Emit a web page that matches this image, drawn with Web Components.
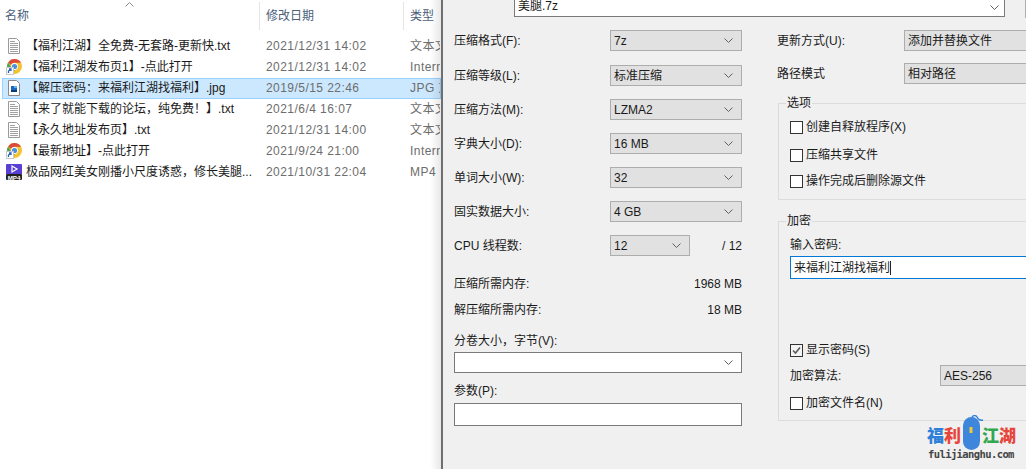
<!DOCTYPE html>
<html lang="zh">
<head>
<meta charset="utf-8">
<title>7z</title>
<style>
    html, body { margin: 0; height: 100%; }
    body {
        width: 1026px;
        height: 469px;
        overflow: hidden;
        display: flex;
        font: 12px/16px "Liberation Sans", "Noto Sans CJK SC", sans-serif;
        color: #1a1a1a;
        background: #fff;
    }
</style>
</head>
<body>
<file-pane>
    <file-row icon="txt" name="【福利江湖】全免费-无套路-更新快.txt" date="2021/12/31 14:02" type="文本文"></file-row>
    <file-row icon="web" name="【福利江湖发布页1】-点此打开" date="2021/12/31 14:02" type="Intern"></file-row>
    <file-row icon="jpg" name="【解压密码：来福利江湖找福利】.jpg" date="2019/5/15 22:46" type="JPG 文" selected></file-row>
    <file-row icon="txt" name="【来了就能下载的论坛，纯免费！】.txt" date="2021/6/4 16:07" type="文本文"></file-row>
    <file-row icon="txt" name="【永久地址发布页】.txt" date="2021/12/31 14:00" type="文本文"></file-row>
    <file-row icon="web" name="【最新地址】-点此打开" date="2021/9/24 21:00" type="Intern"></file-row>
    <file-row icon="mp4" name="极品网红美女刚播小尺度诱惑，修长美腿..." date="2021/10/31 22:04" type="MP4 -"></file-row>
</file-pane>

<zip-dialog>
    <form-row slot="left" label="压缩格式(F):" top="0"><drop-select value="7z"></drop-select></form-row>
    <form-row slot="left" label="压缩等级(L):" top="14"><drop-select value="标准压缩"></drop-select></form-row>
    <form-row slot="left" label="压缩方法(M):" top="13"><drop-select value="LZMA2"></drop-select></form-row>
    <form-row slot="left" label="字典大小(D):" top="13"><drop-select value="16 MB"></drop-select></form-row>
    <form-row slot="left" label="单词大小(W):" top="13"><drop-select value="32"></drop-select></form-row>
    <form-row slot="left" label="固实数据大小:" top="13"><drop-select value="4 GB"></drop-select></form-row>
    <form-row slot="left" label="CPU 线程数:" top="13" note="/ 12"><drop-select value="12" style="width:80px"></drop-select></form-row>
    <form-row slot="left" label="压缩所需内存:" top="20" note="1968 MB" compact></form-row>
    <form-row slot="left" label="解压缩所需内存:" top="10" note="18 MB" compact></form-row>
    <field-stack slot="left" label="分卷大小，字节(V):" top="15" gap="3"><drop-select blank></drop-select></field-stack>
    <field-stack slot="left" label="参数(P):" top="10" gap="4"><text-box></text-box></field-stack>

    <form-row slot="right" label="更新方式(U):" top="0" wide><drop-select value="添加并替换文件" style="width:200px"></drop-select></form-row>
    <form-row slot="right" label="路径模式" top="12" wide><drop-select value="相对路径" style="width:200px"></drop-select></form-row>
    <group-box slot="right" label="选项" top="11" pad="10">
        <check-row label="创建自释放程序(X)"></check-row>
        <check-row label="压缩共享文件" top="12"></check-row>
        <check-row label="操作完成后删除源文件" top="10"></check-row>
    </group-box>
    <group-box slot="right" label="加密" top="13" pad="9">
        <div>输入密码:</div>
        <text-box value="来福利江湖找福利" focused style="margin-top:3px"></text-box>
        <check-row label="显示密码(S)" checked top="63"></check-row>
        <form-row label="加密算法:" top="7" wide2><drop-select value="AES-256" style="width:200px"></drop-select></form-row>
        <check-row label="加密文件名(N)" top="9"></check-row>
    </group-box>
</zip-dialog>

<site-logo></site-logo>

<script>
const ICONS = {
    txt: `<svg width="16" height="16" viewBox="0 0 16 16">
        <path d="M2.5.5h8l3 3v12h-11z" fill="#fff" stroke="#9a9a9a"/>
        <path d="M4 3.5h5M4 5.5h8M4 7.5h8M4 9.5h8M4 11.5h8M4 13.5h8" stroke="#a0a0a0"/>
    </svg>`,
    web: `<svg width="16" height="16" viewBox="0 0 16 16">
        <circle cx="8.5" cy="7.5" r="7.5" fill="#f4c430"/>
        <path d="M8.5 0a7.5 7.5 0 0 1 6.5 3.75H8.5a3.75 3.75 0 0 0-3.4 2.2L2.2 3.4A7.5 7.5 0 0 1 8.5 0z" fill="#dc4a3b"/>
        <path d="M2.2 3.4l3 5A3.75 3.75 0 0 0 9 11.2L6.4 14.7A7.5 7.5 0 0 1 2.2 3.4z" fill="#4ea55a"/>
        <circle cx="8.5" cy="7.5" r="3.4" fill="#fff"/>
        <circle cx="8.5" cy="7.5" r="2.6" fill="#4a8fe0"/>
        <rect x=".5" y="8.5" width="7" height="7" fill="#fff" stroke="#c8c8c8"/>
        <path d="M2.5 14v-2l2-1.5M3 10h2v2" fill="none" stroke="#2a62b8" stroke-width="1.3"/>
    </svg>`,
    jpg: `<svg width="16" height="16" viewBox="0 0 16 16">
        <path d="M2.5.5h8l3 3v12h-11z" fill="#fff" stroke="#8a8a8a"/>
        <rect x="5" y="6" width="6" height="6" fill="#1769c4"/>
        <rect x="5" y="10" width="6" height="2" fill="#0b3c78"/>
        <rect x="8" y="6" width="3" height="2" fill="#5fb4ee"/>
    </svg>`,
    mp4: `<svg width="16" height="16" viewBox="0 0 16 16">
        <path d="M1 0h14a1 1 0 0 1 1 1v9H0V1a1 1 0 0 1 1-1z" fill="#5a3fd6"/>
        <path d="M6 2l5 3-5 3z" fill="none" stroke="#fff" stroke-width="1.2"/>
        <rect y="10" width="16" height="6" rx="1" fill="#222"/>
        <text x="8" y="15.5" text-anchor="middle" font-family="Liberation Sans" font-weight="700" font-size="6.2" fill="#fff">MP4</text>
    </svg>`
};
const CHEVRON = `<svg width="9" height="5" viewBox="0 0 9 5"><path d="M.5.5l4 4 4-4" fill="none" stroke="#606060"/></svg>`;

class FilePane extends HTMLElement {
    constructor() {
        super();
        this.attachShadow({ mode: 'open' }).innerHTML = `
            <style>
                :host { display: block; position: relative; flex: 0 0 441px; width: 441px; height: 469px; overflow: hidden; background: #fff; }
                .head { display: flex; height: 30px; color: #4c607a; }
                .col { box-sizing: border-box; height: 28px; margin-top: 2px; padding-top: 6px; border-right: 1px solid #e5e5e5; position: relative; }
                .name { flex: 0 0 260px; padding-left: 5px; }
                .date { flex: 0 0 144px; padding-left: 6px; }
                .type { flex: 1; padding-left: 6px; border: 0; }
                .sort { position: absolute; left: 125px; top: 0; }
                .rows { padding-top: 6px; }
                .edge { position: absolute; top: 0; right: 0; bottom: 0; width: 11px; background: linear-gradient(90deg, rgba(0,0,0,0), rgba(0,0,0,.09)); }
            </style>
            <div class="head">
                <div class="col name">名称<svg class="sort" width="9" height="5" viewBox="0 0 9 5"><path d="M.5 4.5l4-4 4 4" fill="none" stroke="#8a8a8a"/></svg></div>
                <div class="col date">修改日期</div>
                <div class="col type">类型</div>
            </div>
            <div class="rows"><slot></slot></div>
            <div class="edge"></div>`;
    }
}

class FileRow extends HTMLElement {
    constructor() {
        super();
        this.attachShadow({ mode: 'open' });
    }
    connectedCallback() {
        this.shadowRoot.innerHTML = `
            <style>
                :host { display: block; }
                .row { box-sizing: border-box; display: grid; grid-template-columns: 20px 240px 144px 31px; align-items: center; height: 21px; margin-left: 2px; padding: 0 0 2px 3px; border: 1px solid transparent; white-space: nowrap; overflow: hidden; }
                :host([selected]) .row { background: #cce8ff; border-color: #99d1ff; }
                .icon { display: block; height: 16px; }
                .icon svg { display: block; }
                .date, .type { color: #6d6d6d; letter-spacing: .45px; }
                .type { overflow: hidden; }
            </style>
            <div class="row">
                <span class="icon">${ICONS[this.getAttribute('icon')]}</span>
                <span>${this.getAttribute('name')}</span>
                <span class="date">${this.getAttribute('date')}</span>
                <span class="type">${this.getAttribute('type')}</span>
            </div>`;
    }
}

class ZipDialog extends HTMLElement {
    constructor() {
        super();
        this.attachShadow({ mode: 'open' }).innerHTML = `
            <style>
                :host { display: block; flex: 1; min-width: 0; height: 469px; box-sizing: border-box; border-left: 2px solid #6f6f6f; background: #f0f0f0; overflow: hidden; }
                .top { display: flex; height: 16px; padding-left: 71px; }
                .name { box-sizing: border-box; flex: 0 0 491px; display: flex; justify-content: space-between; align-items: center; height: 17px; padding: 0 3px; background: #fff; border: 1px solid #7a7a7a; border-top: 0; line-height: 12px; }
                .name span { margin-top: -4px; }
                .name svg { margin-top: -2px; margin-right: 2px; }
                .side { flex: none; width: 10px; height: 17px; margin-left: 20px; border: 1px solid #adadad; border-top: 0; background: #e1e1e1; }
                .body { display: flex; padding: 14px 0 0 11px; }
                .left { flex: 0 0 288px; }
                .right { flex: none; width: 300px; margin-left: 35px; }
            </style>
            <div class="top">
                <div class="name"><span>美腿.7z</span>${CHEVRON}</div>
                <div class="side"></div>
            </div>
            <div class="body">
                <div class="left"><slot name="left"></slot></div>
                <div class="right"><slot name="right"></slot></div>
            </div>`;
    }
}

class FormRow extends HTMLElement {
    constructor() {
        super();
        this.attachShadow({ mode: 'open' });
    }
    connectedCallback() {
        const note = this.getAttribute('note');
        const labelWidth = this.hasAttribute('wide') ? 127 : this.hasAttribute('wide2') ? 150 : 156;
        this.shadowRoot.innerHTML = `
            <style>
                :host { display: block; margin-top: ${this.getAttribute('top') || 0}px; }
                .row { display: flex; align-items: center; min-height: ${this.hasAttribute('compact') ? 16 : 21}px; }
                .label { flex: 0 0 ${labelWidth}px; white-space: nowrap; }
                .note { margin-left: auto; white-space: nowrap; }
            </style>
            <div class="row">
                <span class="label">${this.getAttribute('label')}</span>
                <slot></slot>
                ${note ? `<span class="note">${note}</span>` : ''}
            </div>`;
    }
}

class FieldStack extends HTMLElement {
    constructor() {
        super();
        this.attachShadow({ mode: 'open' });
    }
    connectedCallback() {
        this.shadowRoot.innerHTML = `
            <style>
                :host { display: block; margin-top: ${this.getAttribute('top') || 0}px; }
                .label { margin-bottom: ${this.getAttribute('gap') || 0}px; }
            </style>
            <div class="label">${this.getAttribute('label')}</div>
            <slot></slot>`;
    }
}

class DropSelect extends HTMLElement {
    constructor() {
        super();
        this.attachShadow({ mode: 'open' });
    }
    connectedCallback() {
        this.shadowRoot.innerHTML = `
            <style>
                :host { display: block; box-sizing: border-box; flex: none; width: 132px; height: 21px; background: #e1e1e1; border: 1px solid #adadad; }
                :host([blank]) { width: 288px; background: #fff; border-color: #7a7a7a; }
                .box { display: flex; justify-content: space-between; align-items: center; height: 19px; padding: 0 3px; white-space: nowrap; }
                svg { flex: none; margin-right: 5px; }
            </style>
            <div class="box"><span>${this.getAttribute('value') || ''}</span>${CHEVRON}</div>`;
    }
}

class TextBox extends HTMLElement {
    constructor() {
        super();
        this.attachShadow({ mode: 'open' });
    }
    connectedCallback() {
        const value = this.getAttribute('value') || '';
        this.shadowRoot.innerHTML = `
            <style>
                :host { display: block; box-sizing: border-box; width: 288px; height: 23px; background: #fff; border: 1px solid #7a7a7a; }
                :host([focused]) { width: 300px; border-color: #0078d7; }
                .txt { display: flex; align-items: center; height: 21px; padding-left: 3px; }
                .caret { width: 1px; height: 14px; background: #222; }
            </style>
            <div class="txt"><span>${value}</span>${value ? '<span class="caret"></span>' : ''}</div>`;
    }
}

class GroupBox extends HTMLElement {
    constructor() {
        super();
        this.attachShadow({ mode: 'open' });
    }
    connectedCallback() {
        this.shadowRoot.innerHTML = `
            <style>
                :host { display: block; margin-top: ${this.getAttribute('top') || 0}px; margin-left: 1px; }
                fieldset { margin: 0; padding: 8px 0 ${this.getAttribute('pad') || 0}px 11px; border: 1px solid #dcdcdc; min-width: 0; }
                legend { margin-left: -4px; padding: 0 1px; line-height: 16px; }
            </style>
            <fieldset>
                <legend>${this.getAttribute('label')}</legend>
                <slot></slot>
            </fieldset>`;
    }
}

class CheckRow extends HTMLElement {
    constructor() {
        super();
        this.attachShadow({ mode: 'open' });
    }
    connectedCallback() {
        const mark = this.hasAttribute('checked') ? '<path d="M3 6.5l2.5 2.5L10 3.5" fill="none" stroke="#5a5a5a" stroke-width="1.6"/>' : '';
        this.shadowRoot.innerHTML = `
            <style>
                :host { display: block; margin-top: ${this.getAttribute('top') || 0}px; }
                .row { display: flex; align-items: center; gap: 3px; height: 16px; white-space: nowrap; }
                svg { flex: none; }
            </style>
            <div class="row">
                <svg width="13" height="13" viewBox="0 0 13 13"><rect x=".5" y=".5" width="12" height="12" fill="${mark ? '#f4f4f4' : '#fff'}" stroke="#333"/>${mark}</svg>
                <span>${this.getAttribute('label')}</span>
            </div>`;
    }
}

class SiteLogo extends HTMLElement {
    constructor() {
        super();
        this.attachShadow({ mode: 'open' }).innerHTML = `
            <style>
                :host { position: absolute; left: 926px; top: 415px; width: 92px; height: 50px; display: block; }
                .brand { position: absolute; left: 1px; top: 9px; display: flex; font: 900 17px/22px "Noto Sans CJK SC", sans-serif; }
                .brand span { width: 17px; text-align: center; }
                .brand .mouse { width: 21px; }
                svg { position: absolute; left: 34px; top: 0; }
                .url { position: absolute; left: 2px; top: 32px; font: 700 10.5px/14px "DejaVu Sans Mono", monospace; letter-spacing: -.6px; color: #444; white-space: nowrap; }
            </style>
            <svg width="26" height="36" viewBox="0 0 26 36">
                <path d="M12 3c0-3 4-3 5-1s3 4 6 3" fill="none" stroke="#2f7fd8" stroke-width="1.4"/>
                <rect x="3" y="2" width="17" height="33" rx="8.5" fill="#3d86dc"/>
                <rect x="9.5" y="12" width="3" height="6" fill="#f0c63a"/>
            </svg>
            <div class="brand">
                <span style="color:#2f7fd8">福</span><span style="color:#e8463c">利</span><span class="mouse"></span><span style="color:#2fa84f">江</span><span style="color:#e8463c">湖</span>
            </div>
            <div class="url">fulijianghu.com</div>`;
    }
}

customElements.define('file-pane', FilePane);
customElements.define('file-row', FileRow);
customElements.define('zip-dialog', ZipDialog);
customElements.define('form-row', FormRow);
customElements.define('field-stack', FieldStack);
customElements.define('drop-select', DropSelect);
customElements.define('text-box', TextBox);
customElements.define('group-box', GroupBox);
customElements.define('check-row', CheckRow);
customElements.define('site-logo', SiteLogo);
</script>
</body>
</html>
